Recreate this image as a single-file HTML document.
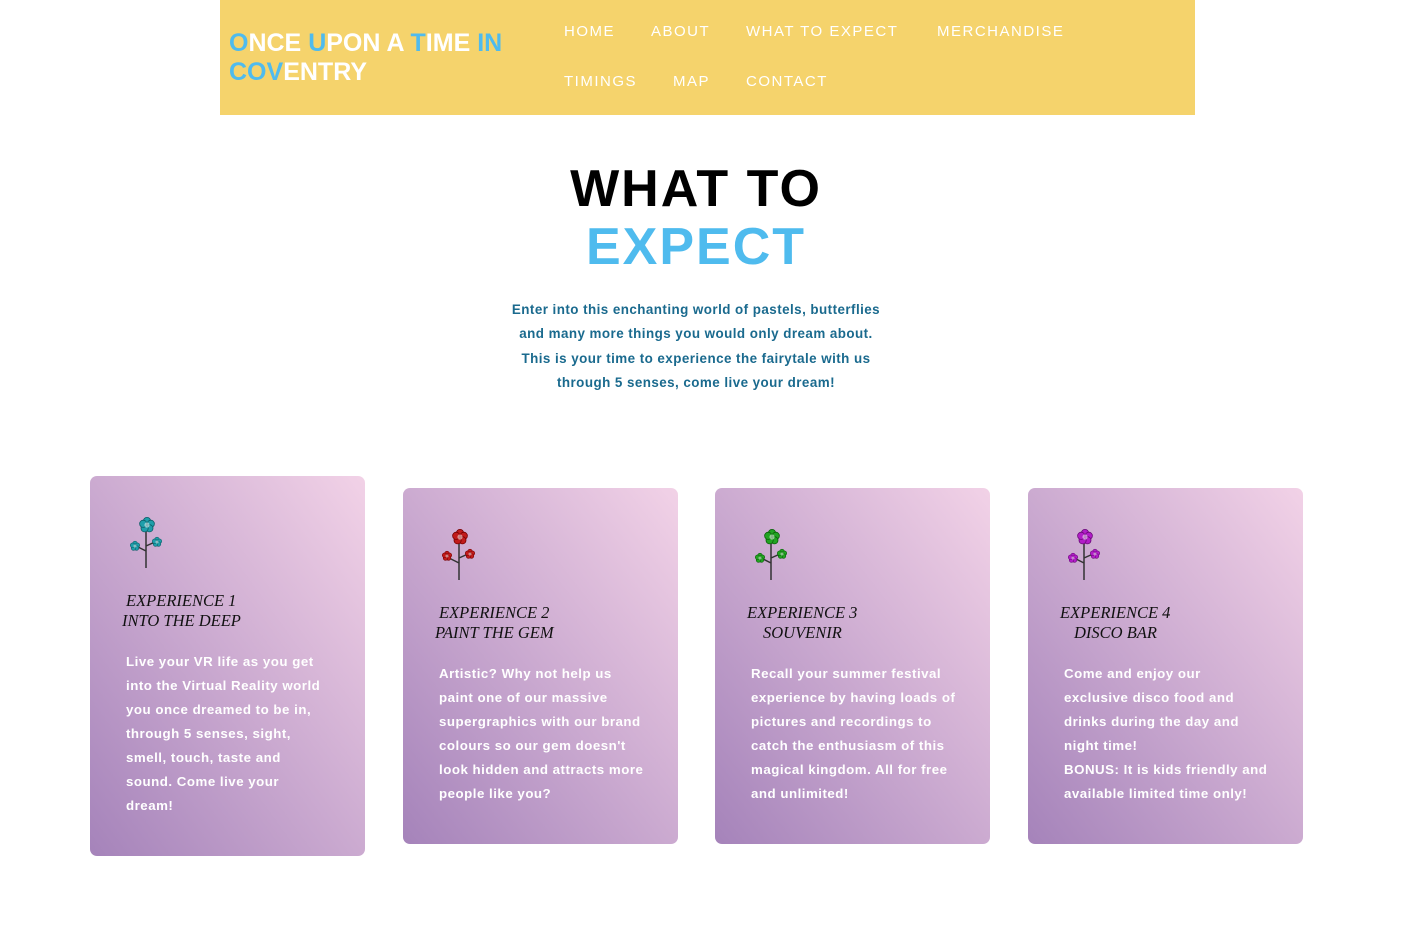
<!DOCTYPE html>
<html><head><style>
body{margin:0;background:#fff;font-family:"Liberation Sans",sans-serif;width:1413px;height:952px;overflow:hidden;position:relative}
.hdr{position:absolute;left:220px;top:0;width:975px;height:115px;background:#f5d36c}
.logo{position:absolute;left:9px;top:29px;font-weight:bold;font-size:25px;line-height:29px;color:#fff;letter-spacing:0}
.b{color:#4fbbee}
.nav{position:absolute;color:#fff;font-size:15px;letter-spacing:1.5px}
h1{position:absolute;left:0;width:1392px;top:160px;margin:0;text-align:center;font-size:52px;line-height:58px;letter-spacing:2px;font-weight:bold}
.intro{position:absolute;left:506px;width:380px;top:298px;text-align:center;color:#1a6a8e;font-weight:bold;font-size:13.4px;line-height:24.3px;letter-spacing:.45px}
.card{position:absolute;width:275px;border-radius:7px;background:linear-gradient(to top right,#a583ba,#f2d2e7)}
.t{position:absolute;font-family:"Liberation Serif",serif;font-style:italic;font-size:16.5px;line-height:20px;color:#111}
.p{position:absolute;left:36px;width:200px;color:#fff;font-weight:bold;font-size:13.3px;line-height:24px;letter-spacing:.5px}
svg{position:absolute}
</style></head><body>
<div class="hdr">
<div class="logo"><span class="b">O</span>NCE <span class="b">U</span>PON A <span class="b">T</span>IME <span class="b">IN</span><br><span class="b">COV</span>ENTRY</div>
<div class="nav" style="left:344px;top:23px">HOME</div>
<div class="nav" style="left:431px;top:23px">ABOUT</div>
<div class="nav" style="left:526px;top:23px">WHAT TO EXPECT</div>
<div class="nav" style="left:717px;top:23px">MERCHANDISE</div>
<div class="nav" style="left:344px;top:73px">TIMINGS</div>
<div class="nav" style="left:453px;top:73px">MAP</div>
<div class="nav" style="left:526px;top:73px">CONTACT</div>
</div>
<h1>WHAT TO<br><span class="b">EXPECT</span></h1>
<div class="intro">Enter into this enchanting world of pastels, butterflies and many more things you would only dream about. This is your time to experience the fairytale with us through 5 senses, come live your dream!</div>

<svg width="0" height="0" style="position:absolute"><defs>
<g id="fl"><g stroke-width="0.8"><circle cx="0" cy="-4" r="3.6"/><circle cx="3.8" cy="-1.2" r="3.6"/><circle cx="2.4" cy="3.3" r="3.6"/><circle cx="-2.4" cy="3.3" r="3.6"/><circle cx="-3.8" cy="-1.2" r="3.6"/></g><circle r="2.6" fill-opacity=".5" fill="#fff" stroke="none"/></g>
<g id="fs"><g stroke-width="0.6"><circle cx="0" cy="-2.5" r="2.3"/><circle cx="2.4" cy="-0.8" r="2.3"/><circle cx="1.5" cy="2" r="2.3"/><circle cx="-1.5" cy="2" r="2.3"/><circle cx="-2.4" cy="-0.8" r="2.3"/></g><circle r="1.5" fill-opacity=".5" fill="#fff" stroke="none"/></g>
</defs></svg>

<div class="card" style="left:90px;top:476px;height:380px">
<svg style="left:36px;top:36px" width="44" height="58" viewBox="0 0 44 58"><path d="M20 56V14M20 34L29 30M20 39L10 34" stroke="#333" stroke-width="1.5" fill="none"/><g fill="#1e9eaa" stroke="#0d5e68"><use href="#fl" x="21" y="13"/><use href="#fs" x="9" y="34"/><use href="#fs" x="31" y="30"/></g></svg>
<div class="t" style="left:36px;top:115px">EXPERIENCE 1</div>
<div class="t" style="left:32px;top:135px">INTO THE DEEP</div>
<div class="p" style="top:174px">Live your VR life as you get into the Virtual Reality world you once dreamed to be in, through 5 senses, sight, smell, touch, taste and sound. Come live your dream!</div>
</div>

<div class="card" style="left:403px;top:488px;height:356px">
<svg style="left:36px;top:36px" width="44" height="58" viewBox="0 0 44 58"><path d="M20 56V14M20 34L29 30M20 39L10 34" stroke="#333" stroke-width="1.5" fill="none"/><g fill="#c11b1b" stroke="#700"><use href="#fl" x="21" y="13"/><use href="#fs" x="8" y="32"/><use href="#fs" x="31" y="30"/></g></svg>
<div class="t" style="left:36px;top:115px">EXPERIENCE 2</div>
<div class="t" style="left:32px;top:135px">PAINT THE GEM</div>
<div class="p" style="top:174px;width:205px">Artistic? Why not help us paint one of our massive supergraphics with our brand colours so our gem doesn't look hidden and attracts more people like you?</div>
</div>

<div class="card" style="left:715px;top:488px;height:356px">
<svg style="left:36px;top:36px" width="44" height="58" viewBox="0 0 44 58"><path d="M20 56V14M20 34L29 30M20 39L10 34" stroke="#333" stroke-width="1.5" fill="none"/><g fill="#22a322" stroke="#0a600a"><use href="#fl" x="21" y="13"/><use href="#fs" x="9" y="34"/><use href="#fs" x="31" y="30"/></g></svg>
<div class="t" style="left:32px;top:115px">EXPERIENCE 3</div>
<div class="t" style="left:48px;top:135px">SOUVENIR</div>
<div class="p" style="top:174px;width:210px">Recall your summer festival experience by having loads of pictures and recordings to catch the enthusiasm of this magical kingdom. All for free and unlimited!</div>
</div>

<div class="card" style="left:1028px;top:488px;height:356px">
<svg style="left:36px;top:36px" width="44" height="58" viewBox="0 0 44 58"><path d="M20 56V14M20 34L29 30M20 39L10 34" stroke="#333" stroke-width="1.5" fill="none"/><g fill="#b21cc8" stroke="#6a0a78"><use href="#fl" x="21" y="13"/><use href="#fs" x="9" y="34"/><use href="#fs" x="31" y="30"/></g></svg>
<div class="t" style="left:32px;top:115px">EXPERIENCE 4</div>
<div class="t" style="left:46px;top:135px">DISCO BAR</div>
<div class="p" style="top:174px;width:205px">Come and enjoy our exclusive disco food and drinks during the day and night time!<br>BONUS: It is kids friendly and available limited time only!</div>
</div>
</body></html>
